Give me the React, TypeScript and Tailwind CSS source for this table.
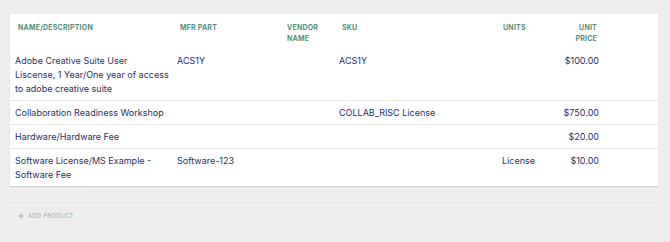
import React from 'react';

interface LineItem {
  id: number;
  name: string;
  mfrPart: string;
  vendor: string;
  sku: string;
  units: string;
  price: string;
}

const items: LineItem[] = [
  {
    id: 1,
    name: 'Adobe Creative Suite User Liscense, 1 Year/One year of access to adobe creative suite',
    mfrPart: 'ACS1Y',
    vendor: '',
    sku: 'ACS1Y',
    units: '',
    price: '$100.00',
  },
  { id: 2, name: 'Collaboration Readiness Workshop', mfrPart: '', vendor: '', sku: 'COLLAB_RISC License', units: '', price: '$750.00' },
  { id: 3, name: 'Hardware/Hardware Fee', mfrPart: '', vendor: '', sku: '', units: '', price: '$20.00' },
  { id: 4, name: 'Software License/MS Example - Software Fee', mfrPart: 'Software-123', vendor: '', sku: '', units: 'License', price: '$10.00' },
];

const cols = 'grid grid-cols-[162px_110px_52px_163px_60px_37px]';

const App: React.FC = () => {
  return (
    <div className="min-h-screen w-[670px] bg-[#ededed] pt-[14px] font-['Inter',sans-serif]">
      {/* Products table */}
      <div className="mx-[10px] w-[648px] bg-white shadow-[0_1px_1px_rgba(0,0,0,0.12)]">
        <div className={`${cols} px-[5px] pt-[8px] pb-[5px] text-[7px] font-bold uppercase leading-[11px] tracking-[0.03em] text-[#52907a]`}>
          <div className="pl-[3px]">Name/Description</div>
          <div className="pl-[3px]">Mfr Part</div>
          <div>Vendor<br />Name</div>
          <div className="pl-[3px]">SKU</div>
          <div className="pl-[1px]">Units</div>
          <div className="text-right pr-[2px] whitespace-nowrap">Unit<br />Price</div>
        </div>

        {items.map((item, index) => (
          <div
            key={item.id}
            className={`${cols} px-[5px] py-[4.5px] text-[9px] leading-[14px] text-[#2b2f66] ${index > 0 ? 'border-t border-[#e9e9e9]' : ''}`}
          >
            <div className="pr-[8px]">{item.name}</div>
            <div>{item.mfrPart}</div>
            <div>{item.vendor}</div>
            <div>{item.sku}</div>
            <div>{item.units}</div>
            <div className="text-right whitespace-nowrap">{item.price}</div>
          </div>
        ))}
      </div>

      {/* Footer action */}
      <div className="mx-[10px] mt-[16px] w-[647px] border-t border-[#e2e2e2] pt-[8px]">
        <button className="flex items-center gap-[4px] pl-[8px] text-[6px] uppercase leading-[10px] tracking-[0.03em] text-[#ababab]">
          <svg width="6" height="6" viewBox="0 0 6 6" className="text-[#b5b5b5]">
            <path d="M3 0.5v5M0.5 3h5" stroke="currentColor" strokeWidth="1.4" />
          </svg>
          Add Product
        </button>
      </div>
    </div>
  );
};

export default App;
